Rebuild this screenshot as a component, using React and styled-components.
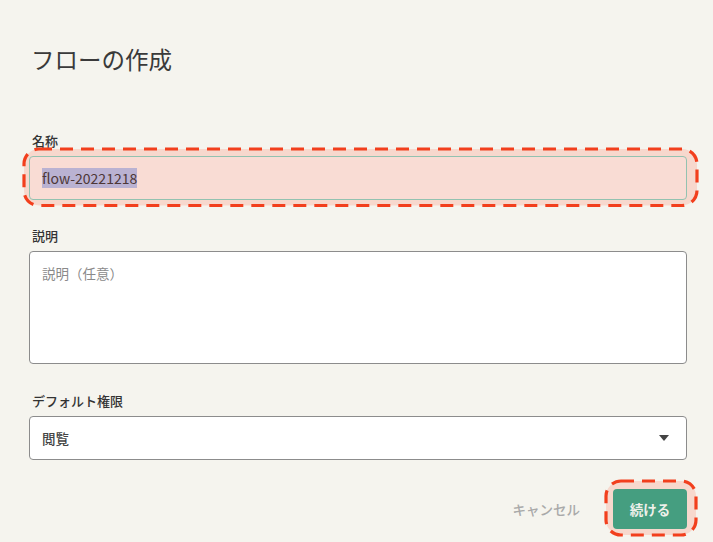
import React from 'react';
import styled, { createGlobalStyle } from 'styled-components';

const GlobalStyle = createGlobalStyle`
  html, body {
    margin: 0;
    padding: 0;
    background: #f5f4ee;
  }
  body {
    font-family: "Noto Sans CJK JP", "Noto Sans", sans-serif;
    color: #333;
  }
`;

const Dialog = styled.div`
  width: 713px;
  height: 542px;
  box-sizing: border-box;
  padding: 43px 26px 0 29px;
  display: flex;
  flex-direction: column;
`;

const Title = styled.h1`
  margin: 0 0 57px 2px;
  font-size: 23.5px;
  line-height: 32px;
  font-weight: 400;
  color: #3a3a3a;
`;

const Field = styled.div`
  display: flex;
  flex-direction: column;
  margin-bottom: ${(p) => p.$gap || 0}px;
`;

const Label = styled.label`
  font-size: 13px;
  line-height: 18px;
  font-weight: 500;
  color: #333;
  margin: 0 0 6px 3px;
`;

const Mark = styled.div`
  position: relative;
  isolation: isolate;
`;

const Ring = styled.svg`
  position: absolute;
  inset: ${(p) => p.$inset};
  width: calc(100% + ${(p) => p.$w}px);
  height: calc(100% + ${(p) => p.$h}px);
  overflow: visible;
  z-index: -1;
  pointer-events: none;
`;

const Highlight = ({ inset, w, h, children }) => (
  <Mark>
    <Ring $inset={inset} $w={w} $h={h}>
      <rect
        x="0"
        y="0"
        width="100%"
        height="100%"
        rx="15"
        fill="#f7d8cd"
        stroke="#f23f1d"
        strokeWidth="3.2"
        strokeDasharray="13 8"
      />
    </Ring>
    {children}
  </Mark>
);

const Box = styled.div`
  box-sizing: border-box;
  height: ${(p) => p.$h}px;
  border: 1px solid ${(p) => (p.$focus ? '#93c2b0' : '#8c8c8c')};
  border-radius: 4px;
  background: ${(p) => (p.$focus ? '#f9dcd4' : '#fff')};
  padding: ${(p) => (p.$top ? '11px 12px' : '0 12px')};
  display: flex;
  align-items: ${(p) => (p.$top ? 'flex-start' : 'center')};
  justify-content: space-between;
  font-size: 13.5px;
  line-height: 20px;
`;

const Value = styled.span`
  color: #4d3737;
  background: #bab2d2;
  font-size: 14px;
`;

const Placeholder = styled.span`
  color: #8a8a8a;
`;

const SelectText = styled.span`
  color: #444;
  font-weight: 500;
`;

const Caret = styled.span`
  width: 0;
  height: 0;
  border-left: 5px solid transparent;
  border-right: 5px solid transparent;
  border-top: 6px solid #444;
  margin-right: 5px;
`;

const Actions = styled.div`
  display: flex;
  justify-content: flex-end;
  align-items: center;
  gap: 33px;
`;

const TextButton = styled.button`
  border: none;
  background: none;
  padding: 0;
  font-family: inherit;
  font-size: 13.5px;
  font-weight: 500;
  color: #a9a9a9;
`;

const Primary = styled.button`
  display: block;
  width: 74px;
  height: 40px;
  border: none;
  border-radius: 4px;
  background: #459e80;
  color: #eef0ea;
  font-family: inherit;
  font-size: 13.5px;
  font-weight: 700;
`;

export default function App() {
  return (
    <>
      <GlobalStyle />
      <Dialog>
        <Title>フローの作成</Title>
        <Field $gap={27}>
          <Label>名称</Label>
          <Highlight inset="-7.5px auto auto -5.5px" w={15} h={12.5}>
            <Box $h={44} $focus>
              <Value>flow-20221218</Value>
            </Box>
          </Highlight>
        </Field>
        <Field $gap={28}>
          <Label>説明</Label>
          <Box $h={113} $top>
            <Placeholder>説明（任意）</Placeholder>
          </Box>
        </Field>
        <Field $gap={29}>
          <Label>デフォルト権限</Label>
          <Box $h={44}>
            <SelectText>閲覧</SelectText>
            <Caret />
          </Box>
        </Field>
        <Actions>
          <TextButton>キャンセル</TextButton>
          <Highlight inset="-8.5px auto auto -7.5px" w={16} h={14}>
            <Primary>続ける</Primary>
          </Highlight>
        </Actions>
      </Dialog>
    </>
  );
}
